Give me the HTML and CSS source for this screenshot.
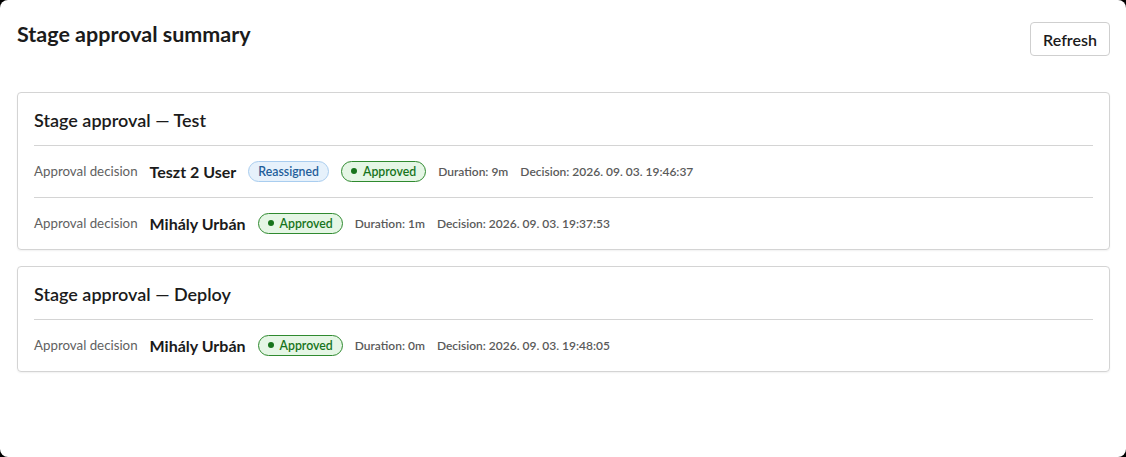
FILE: index.html
```html
<!DOCTYPE html>
<html lang="en">
<head>
<meta charset="utf-8">
<title>Stage approval summary</title>
<link rel="stylesheet" href="styles.css">
</head>
<body>
<div class="dialog">
  <header class="header">
    <h1 class="title">Stage approval summary</h1>
    <button class="btn">Refresh</button>
  </header>

  <section class="card">
    <h2 class="card-title">Stage approval — Test</h2>
    <div class="row">
      <span class="label">Approval decision</span>
      <span class="name">Teszt 2 User</span>
      <span class="badge badge-info">Reassigned</span>
      <span class="badge badge-ok"><span class="dot"></span>Approved</span>
      <span class="meta">Duration: 9m</span>
      <span class="meta">Decision: 2026. 09. 03. 19:46:37</span>
    </div>
    <div class="row">
      <span class="label">Approval decision</span>
      <span class="name">Mihály Urbán</span>
      <span class="badge badge-ok"><span class="dot"></span>Approved</span>
      <span class="meta">Duration: 1m</span>
      <span class="meta">Decision: 2026. 09. 03. 19:37:53</span>
    </div>
  </section>

  <section class="card">
    <h2 class="card-title">Stage approval — Deploy</h2>
    <div class="row">
      <span class="label">Approval decision</span>
      <span class="name">Mihály Urbán</span>
      <span class="badge badge-ok"><span class="dot"></span>Approved</span>
      <span class="meta">Duration: 0m</span>
      <span class="meta">Decision: 2026. 09. 03. 19:48:05</span>
    </div>
  </section>
</div>
</body>
</html>
```

FILE: styles.css
```css
html, body {
  margin: 0;
  padding: 0;
  background: #000;
}
body {
  font-family: "Segoe UI", Lato, "Noto Sans", sans-serif;
  color: #1b1b1b;
}
.dialog {
  box-sizing: border-box;
  width: 1126px;
  height: 457px;
  background: #fff;
  border-radius: 8px;
  padding: 21px 16px 0 17px;
}
.header {
  display: flex;
  justify-content: space-between;
  align-items: flex-start;
  margin-bottom: 36px;
}
.title {
  margin: 0;
  font-size: 21.5px;
  line-height: 26px;
  font-weight: 700;
  color: #1b1b1b;
}
.btn {
  box-sizing: border-box;
  height: 34px;
  width: 80px;
  margin-top: 1px;
  background: #fff;
  border: 1px solid #cfcfcf;
  border-radius: 4px;
  font-family: inherit;
  font-size: 16px;
  font-weight: 600;
  color: #1b1b1b;
  padding: 0;
}
.card {
  border: 1px solid #d4d4d4;
  border-radius: 4px;
  padding: 15px 16px 0;
  margin-bottom: 16px;
  box-shadow: 0 1px 2px rgba(0,0,0,0.06);
}
.card-title {
  margin: 0 0 13px;
  font-size: 18px;
  line-height: 24px;
  font-weight: 600;
  color: #1b1b1b;
}
.row {
  display: flex;
  align-items: center;
  gap: 12px;
  border-top: 1px solid #d4d4d4;
  padding: 13px 0 14px;
  height: 24px;
}
.label {
  font-size: 13.3px;
  color: #616161;
}
.name {
  font-size: 16px;
  font-weight: 700;
  color: #1b1b1b;
}
.badge {
  box-sizing: border-box;
  display: inline-flex;
  align-items: center;
  height: 21px;
  border-radius: 11px;
  font-size: 12.3px;
  font-weight: 600;
  padding: 0 9px;
}
.badge-info {
  background: #e6f1fb;
  border: 1px solid #a9cdef;
  color: #1f5e9a;
}
.badge-ok {
  background: #e5f6e5;
  border: 1px solid #2f8a2f;
  color: #17741b;
  gap: 6px;
}
.dot {
  width: 6px;
  height: 6px;
  border-radius: 50%;
  background: #17741b;
}
.meta {
  font-size: 12px;
  font-weight: 600;
  color: #5a5a5a;
}
```
